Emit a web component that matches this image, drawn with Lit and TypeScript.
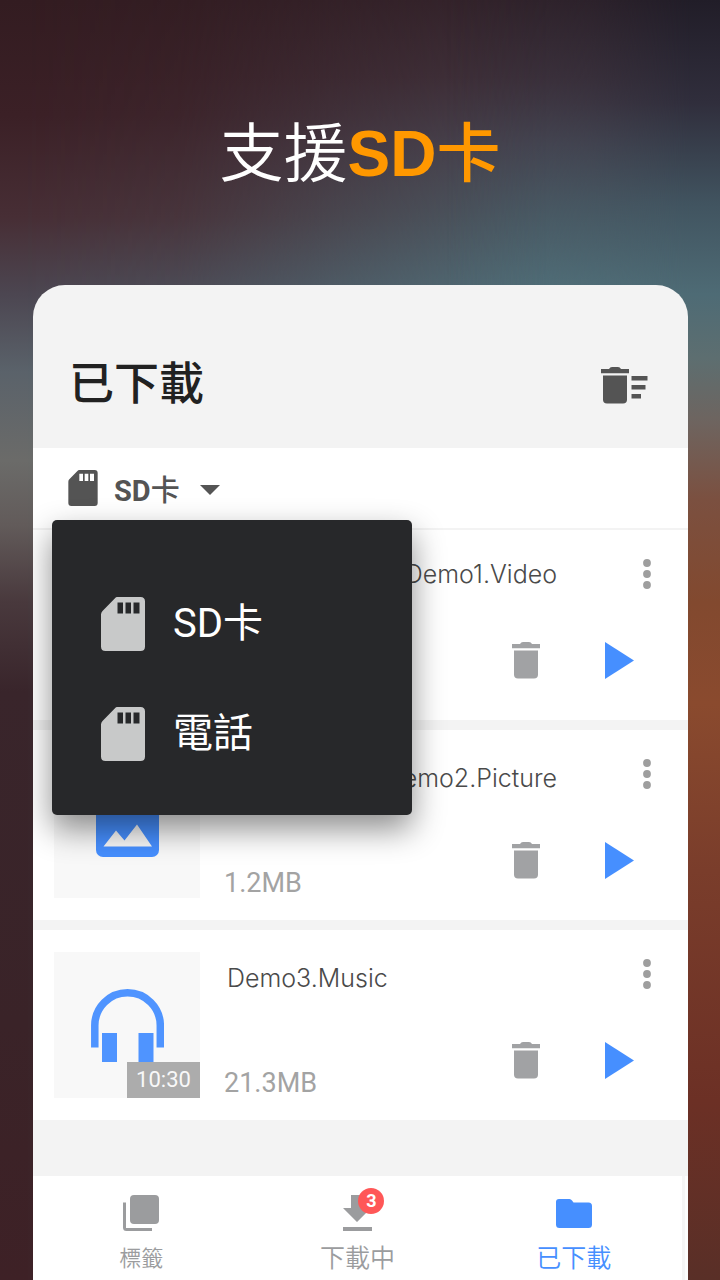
import { LitElement, html, css, svg, nothing } from "lit";
import { customElement, state } from "lit/decorators.js";
import { classMap } from "lit/directives/class-map.js";

interface DownloadItem {
  title: string;
  kind: "video" | "picture" | "music";
  size?: string;
  duration?: string;
  alignEnd?: boolean;
}

const ITEMS: DownloadItem[] = [
  { title: "Demo1.Video", kind: "video", alignEnd: true },
  { title: "Demo2.Picture", kind: "picture", size: "1.2MB", alignEnd: true },
  { title: "Demo3.Music", kind: "music", size: "21.3MB", duration: "10:30" },
];

const sdIcon = html`<svg class="sd-icon" viewBox="0 0 44 54" aria-hidden="true">
  <path
    fill="currentColor"
    fill-rule="evenodd"
    d="M16 0H39.500Q44 0 44 4.500V49.500Q44 54 39.500 54H4.500Q0 54 0 49.500V17.500Q0 15.500 1.500 14L14 1.200Q15 0 16 0ZM16.500 5.500V16.500H22V5.500ZM24.500 5.500V16.500H30V5.500ZM32.500 5.500V16.500H38.500V5.500Z"
  />
</svg>`;

const trashShape = svg`<path d="M8 2Q9 0 11 0H17Q19 0 20 2H28V6.300H0V2Z"/>
  <path d="M2 8.500H26V32.500Q26 36.500 22 36.500H6Q2 36.500 2 32.500Z"/>`;

const headphones = html`<svg class="headphones" viewBox="0 0 73 73" aria-hidden="true">
  <path fill="none" stroke="#4f94ff" stroke-width="7.500" d="M3.800 58.500V36.500a32.750 32.750 0 0 1 65.500 0V58.500" />
  <path fill="#4f94ff" d="M11 44H26V73H11ZM47.500 44H62.500V73H47.500Z" />
</svg>`;

const picture = html`<svg class="picture" viewBox="0 0 63 63" aria-hidden="true">
  <rect width="63" height="63" rx="7" fill="#468fff" />
  <path fill="#f8f8f8" d="M7.500 52.500L20 36.500L28.500 46.500L41 30.500L56 52.500Z" />
</svg>`;

@customElement("app-root")
export class AppRoot extends LitElement {
  @state() private menuOpen = true;
  @state() private storage = "SD卡";

  static styles = css`
    :host {
      display: block;
      font-family: Roboto, "Noto Sans CJK TC", sans-serif;
    }
    * {
      box-sizing: border-box;
    }
    button {
      border: 0;
      padding: 0;
      background: none;
      font: inherit;
      color: inherit;
      cursor: pointer;
    }
    svg {
      display: block;
    }
    .page {
      position: relative;
      isolation: isolate;
      min-height: 100vh;
      display: flex;
      flex-direction: column;
      background: linear-gradient(180deg, #34252d 0%, #3f323c 6%, #484652 11%, #4b5b65 17%, #51707a 23%);
    }
    .page::before,
    .page::after {
      content: "";
      position: absolute;
      inset: 0;
      z-index: -1;
    }
    .page::before {
      background: linear-gradient(180deg, #331c21 0%, #3b2026 9%, #472e35 17%, #4c4651 23%, #5a626a 29%, #6b6b69 36%, #625b5a 41%, #49393d 47%, #39252b 54%, #3a2328 80%, #3e2126 100%);
      mask-image: linear-gradient(90deg, #000 3%, rgba(0, 0, 0, 0.85) 25%, rgba(0, 0, 0, 0.4) 50%, transparent 76%);
    }
    .page::after {
      background: linear-gradient(180deg, #211d28 0%, #302e3c 8%, #415460 16%, #4e6b75 23%, #5d6e70 28%, #6e645f 33%, #7b5040 39%, #82492f 47%, #8a4a2e 55%, #7a3d2b 68%, #6c3025 86%, #592f27 100%);
      mask-image: linear-gradient(270deg, #000 4%, rgba(0, 0, 0, 0.4) 18%, transparent 38%);
    }
    .headline {
      margin: 0;
      padding-top: 106px;
      height: 285px;
      text-align: center;
      color: #fff;
      font: 350 64px/96px "Liberation Sans", "Noto Sans CJK TC", sans-serif;
    }
    .headline strong {
      font-weight: 700;
      color: #ff9800;
    }
    .headline .cjk {
      font-weight: 500;
    }
    .card {
      flex: 1;
      display: flex;
      flex-direction: column;
      margin: 0 32px 0 33px;
      border-radius: 32px 32px 0 0;
      background: #f3f3f3;
      overflow: hidden;
    }
    .card-head {
      display: flex;
      align-items: center;
      justify-content: space-between;
      padding: 37px 40px 0 36px;
      height: 163px;
      color: #545454;
    }
    .card-head h2 {
      margin: 0;
      font-size: 45px;
      line-height: 64px;
      font-weight: 500;
      color: #212121;
    }
    .clear-icon {
      width: 47px;
      height: 37px;
    }
    .storage {
      position: relative;
      z-index: 1;
      height: 82px;
      background: #fff;
      border-bottom: 2px solid #f3f3f3;
    }
    .storage-button {
      display: flex;
      align-items: center;
      height: 80px;
      padding: 0 20px 0 35px;
      color: #545454;
      font-size: 29px;
      font-weight: 700;
    }
    .storage-button .sd-icon {
      width: 30px;
      height: 36px;
      margin-right: 16px;
    }
    .storage-button .cjk {
      font-weight: 500;
    }
    .caret {
      width: 20px;
      height: 14px;
      margin-left: 20px;
    }
    .menu {
      position: absolute;
      left: 19px;
      top: 72px;
      width: 360px;
      padding: 49px 0 26px;
      border-radius: 5px;
      background: #27282a;
      box-shadow: 0 14px 32px rgba(0, 0, 0, 0.45);
      color: #fff;
    }
    .menu-item {
      display: flex;
      align-items: center;
      width: 100%;
      height: 110px;
      padding-left: 49px;
      gap: 28px;
      font-size: 40px;
      line-height: 56px;
    }
    .menu-item .sd-icon {
      width: 44px;
      height: 54px;
      color: #c8c9c9;
    }
    .list {
      display: flex;
      flex-direction: column;
      gap: 10px;
      margin: 0;
      padding: 0;
      list-style: none;
    }
    .item {
      display: flex;
      gap: 24px;
      height: 190px;
      padding: 22px 21px;
      background: #fff;
    }
    .thumb {
      position: relative;
      flex: none;
      display: flex;
      align-items: center;
      justify-content: center;
      width: 146px;
      height: 146px;
      background: #f8f8f8;
    }
    .headphones {
      width: 73px;
      height: 73px;
    }
    .picture {
      width: 63px;
      height: 63px;
    }
    .duration {
      position: absolute;
      right: 0;
      bottom: 0;
      width: 73px;
      height: 36px;
      background: #acacac;
      color: #f8f8f8;
      font-size: 22px;
      line-height: 36px;
      text-align: center;
    }
    .info {
      flex: 1;
      min-width: 0;
      display: flex;
      flex-direction: column;
      justify-content: space-between;
    }
    .row {
      display: flex;
    }
    .title {
      flex: 1;
      margin: 0;
      padding: 4px 70px 0 3px;
      font: 350 25px/44px Inter, sans-serif;
      color: #4a4a4a;
    }
    .title.end {
      text-align: right;
    }
    .item:first-child .title {
      padding-top: 0;
    }
    .more {
      width: 40px;
      height: 44px;
      color: #9e9e9e;
    }
    .more svg {
      width: 8px;
      height: 30px;
      margin: 0 auto;
    }
    .bottom {
      height: 56px;
      align-items: flex-start;
      padding-right: 33px;
    }
    .size {
      flex: 1;
      align-self: flex-end;
      font: 400 27px/30px Roboto, sans-serif;
      color: #a3a3a3;
    }
    .delete {
      margin-right: 65px;
      color: #a1a2a4;
    }
    .delete svg {
      width: 28px;
      height: 37px;
    }
    .play svg {
      width: 29px;
      height: 37px;
    }
    .tabs {
      margin-top: auto;
      height: 104px;
      padding-right: 6px;
      display: grid;
      grid-template-columns: repeat(3, 1fr);
      background: linear-gradient(270deg, #fdfdfd 3px, #f5f5f5 3px, #f5f5f5 6px, #fff 6px);
    }
    .tab {
      display: flex;
      flex-direction: column;
      align-items: center;
      padding-top: 18px;
      gap: 9px;
      color: #9b9c9e;
      font-size: 25px;
      line-height: 36px;
      font-weight: 350;
      text-decoration: none;
    }
    .tab.small {
      font-size: 22px;
    }
    .tab.active {
      color: #468fff;
    }
    .tab-icon {
      position: relative;
    }
    .tab-icon svg {
      width: 38px;
      height: 38px;
    }
    .badge {
      position: absolute;
      left: 20px;
      top: -6px;
      width: 26px;
      height: 26px;
      border-radius: 50%;
      background: #ff5757;
      color: #fff;
      font-size: 18px;
      font-weight: 700;
      line-height: 26px;
      text-align: center;
    }
  `;

  private choose(name: string) {
    this.storage = name;
    this.menuOpen = false;
  }

  private renderStorageName() {
    return this.storage === "SD卡"
      ? html`<span>SD<span class="cjk">卡</span></span>`
      : html`<span class="cjk">${this.storage}</span>`;
  }

  private renderThumb(item: DownloadItem) {
    return html`<div class="thumb">
      ${item.kind === "music" ? headphones : item.kind === "picture" ? picture : nothing}
      ${item.duration ? html`<span class="duration">${item.duration}</span>` : nothing}
    </div>`;
  }

  private renderItem(item: DownloadItem) {
    return html`<li class="item">
      ${this.renderThumb(item)}
      <div class="info">
        <div class="row">
          <h3 class=${classMap({ title: true, end: !!item.alignEnd })}>${item.title}</h3>
          <button class="more" aria-label="更多">
            <svg viewBox="0 0 8 30" fill="currentColor">
              <circle cx="4" cy="4" r="3.900" />
              <circle cx="4" cy="15" r="3.900" />
              <circle cx="4" cy="26" r="3.900" />
            </svg>
          </button>
        </div>
        <div class="row bottom">
          <span class="size">${item.size ?? nothing}</span>
          <button class="delete" aria-label="刪除">
            <svg viewBox="0 0 28 37" fill="currentColor">${trashShape}</svg>
          </button>
          <button class="play" aria-label="播放">
            <svg viewBox="0 0 29 37"><path fill="#468fff" d="M0 0L29 18.500L0 37Z" /></svg>
          </button>
        </div>
      </div>
    </li>`;
  }

  render() {
    return html`<main class="page">
      <h1 class="headline">支援<strong>SD<span class="cjk">卡</span></strong></h1>
      <section class="card">
        <header class="card-head">
          <h2>已下載</h2>
          <button aria-label="清除">
            <svg class="clear-icon" viewBox="0 0 47 37" fill="currentColor">
              ${trashShape}
              <path d="M30.500 9H46.500V13.500H30.500ZM30.500 18H44.500V22.500H30.500ZM30.500 27H40V31.500H30.500Z" />
            </svg>
          </button>
        </header>
        <div class="storage">
          <button
            class="storage-button"
            aria-haspopup="menu"
            aria-expanded=${this.menuOpen ? "true" : "false"}
            @click=${() => (this.menuOpen = !this.menuOpen)}
          >
            ${sdIcon}${this.renderStorageName()}
            <svg class="caret" viewBox="0 0 20 14" aria-hidden="true">
              <path fill="currentColor" d="M0 4H20L10 14Z" />
            </svg>
          </button>
          ${this.menuOpen
            ? html`<div class="menu" role="menu">
                ${["SD卡", "電話"].map(
                  (name) => html`<button class="menu-item" role="menuitem" @click=${() => this.choose(name)}>
                    ${sdIcon}<span>${name}</span>
                  </button>`
                )}
              </div>`
            : nothing}
        </div>
        <ul class="list">
          ${ITEMS.map((item) => this.renderItem(item))}
        </ul>
        <nav class="tabs">
          <a class="tab small" href="#tabs">
            <span class="tab-icon">
              <svg viewBox="0 0 38 38" fill="currentColor">
                <rect x="8" y="1" width="29" height="29" rx="4" />
                <path d="M1 8.500H4V34H30V37H4.500Q1 37 1 33.500Z" />
              </svg>
            </span>
            <span>標籤</span>
          </a>
          <a class="tab" href="#downloading">
            <span class="tab-icon">
              <svg viewBox="0 0 38 38" fill="currentColor">
                <path d="M13 1H25V14H33L19 28L5 14H13ZM5 33H34V37H5Z" />
              </svg>
              <span class="badge">3</span>
            </span>
            <span>下載中</span>
          </a>
          <a class="tab active" href="#downloaded" aria-current="page">
            <span class="tab-icon">
              <svg viewBox="0 0 38 38" fill="currentColor">
                <path d="M4 5H14.500Q16 5 17 6.500L18.500 8.500H33.500Q37 8.500 37 12V30.500Q37 34 33.500 34H4.500Q1 34 1 30.500V8Q1 5 4 5Z" />
              </svg>
            </span>
            <span>已下載</span>
          </a>
        </nav>
      </section>
    </main>`;
  }
}
